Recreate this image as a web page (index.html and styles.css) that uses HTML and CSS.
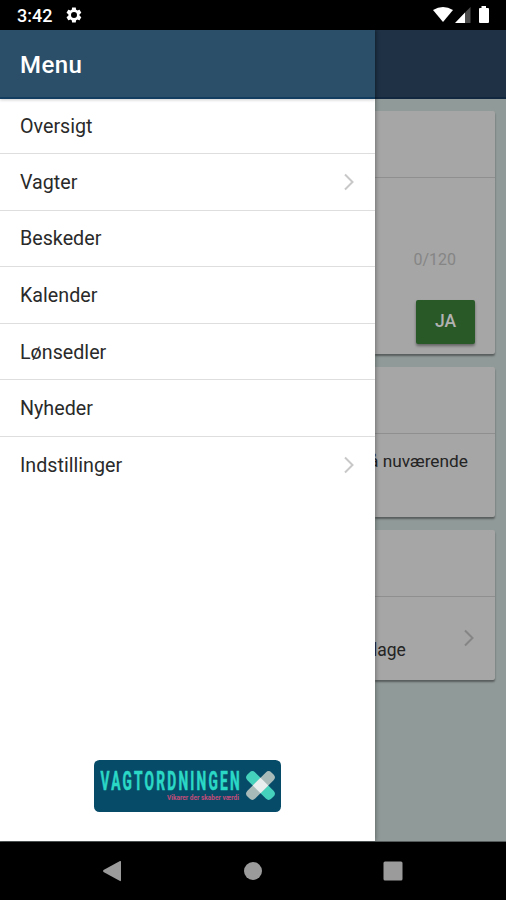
FILE: index.html
```html
<!DOCTYPE html>
<html lang="da">
<head>
<meta charset="utf-8">
<title>Menu</title>
<link rel="stylesheet" href="styles.css">
</head>
<body>
<div class="phone">
  <header class="status">
    <span class="clock">3:42</span>
    <svg class="gear" viewBox="0 0 24 24"><path fill="#fff" fill-rule="evenodd" d="M19.4 13c.1-.7.1-1.300 0-2l2.100-1.700c.2-.1.300-.4.100-.6l-2-3.500c-.1-.2-.4-.3-.6-.2l-2.500 1c-.5-.4-1.100-.7-1.700-1l-.4-2.600c0-.3-.2-.4-.5-.4h-4c-.3 0-.5.200-.5.400L9 5c-.6.300-1.200.6-1.700 1l-2.500-1c-.2-.1-.5 0-.6.200l-2 3.500c-.1.200-.1.500.1.600L4.500 11v2l-2.200 1.700c-.2.100-.2.400-.1.600l2 3.500c.1.200.4.300.6.200l2.500-1c.5.400 1.100.7 1.700 1l.4 2.600c0 .3.200.4.500.4h4c.3 0 .5-.2.500-.4l.4-2.600c.6-.3 1.200-.6 1.700-1l2.500 1c.2.100.5 0 .6-.2l2-3.500c.1-.2.100-.5-.1-.6zM12 8a4 4 0 1 1 0 8a4 4 0 0 1 0-8z"/></svg>
    <svg class="signals" viewBox="0 0 60 20"><path fill="#fff" d="M1 5Q11-1 21 5L11 17Z"/><path fill="#4c4c4c" d="M38.500 2V18H33V7.500Z"/><path fill="#fff" d="M33 7.500V18H23ZM47 4a1 1 0 0 1 1-1H49.500V1H54V3H56a1 1 0 0 1 1 1V17a1 1 0 0 1-1 1H48a1 1 0 0 1-1-1Z"/></svg>
  </header>
  <main class="app">
    <nav class="drawer">
      <h1 class="title">Menu</h1>
      <ul class="menu">
        <li>Oversigt</li>
        <li>Vagter<svg class="chevron" viewBox="0 0 10 18"><path d="M1 1.500L8.500 9L1 16.500"/></svg></li>
        <li>Beskeder</li>
        <li>Kalender</li>
        <li>Lønsedler</li>
        <li>Nyheder</li>
        <li>Indstillinger<svg class="chevron" viewBox="0 0 10 18"><path d="M1 1.500L8.500 9L1 16.500"/></svg></li>
      </ul>
      <svg class="logo" viewBox="0 0 187 52">
        <rect width="187" height="52" rx="5.500" fill="#064b68"/>
        <text class="brand" transform="translate(6.500 30.300) scale(.55 1)" textLength="253" lengthAdjust="spacing">VAGTORDNINGEN</text>
        <text class="tagline" x="73" y="39.500" textLength="72" lengthAdjust="spacingAndGlyphs">Vikarer der skaber værdi</text>
        <g transform="translate(166.500 25.500)">
          <rect x="-17" y="-5.500" width="34" height="11" rx="4" fill="#45d2bd" transform="rotate(45)"/>
          <rect x="-17" y="-5.500" width="34" height="11" rx="4" fill="#a9bbb8" transform="rotate(-45)"/>
          <rect x="-5.500" y="-5.500" width="11" height="11" fill="#e8eeee" transform="rotate(45)"/>
        </g>
      </svg>
    </nav>
    <div class="page">
      <div class="bar"></div>
      <section class="card first">
        <div class="head"></div>
        <p class="count">0/120</p>
        <button class="yes">JA</button>
      </section>
      <section class="card second">
        <div class="head"></div>
        <p class="current">å nuværende</p>
      </section>
      <section class="card third">
        <div class="head"></div>
        <div class="row"><span>lage</span><svg class="chevron" viewBox="0 0 10 18"><path d="M1 1.500L8.500 9L1 16.500"/></svg></div>
      </section>
    </div>
  </main>
  <footer class="navigation">
    <svg viewBox="0 0 20 22"><path fill="#9b9b9b" d="M18 1Q19 .500 19 2V20Q19 21.500 18 21L1.500 12Q.500 11 1.500 10Z"/></svg>
    <svg viewBox="0 0 20 22"><circle cx="10" cy="11" r="9" fill="#9b9b9b"/></svg>
    <svg viewBox="0 0 20 22"><rect x=".5" y="1.500" width="19" height="19" rx="1.500" fill="#9b9b9b"/></svg>
  </footer>
</div>
</body>
</html>
```
FILE: styles.css
```css
* { box-sizing: border-box; }
body { margin: 0; font-family: Roboto, "Noto Sans", sans-serif; background: #000; }
h1, p, ul { margin: 0; padding: 0; }
.phone { width: 506px; height: 900px; display: flex; flex-direction: column; overflow: hidden; }
.status { height: 30px; flex: none; display: flex; align-items: center; padding: 2px 14px 0 17px; background: #000; color: #fff; }
.clock { width: 48px; font-size: 18px; font-weight: 500; line-height: 28px; }
.gear { width: 18px; height: 18px; margin-top: -2px; }
.signals { width: 60px; height: 20px; margin-top: -2px; margin-left: auto; }
.app { height: 812px; flex: none; display: grid; grid-template-columns: 375px 131px; border-bottom: 1px solid #555b5b; }
.drawer { z-index: 1; display: flex; flex-direction: column; align-items: center; background: #fff; box-shadow: 1px 0 4px rgba(0, 0, 0, .3); }
.title { width: 100%; height: 69px; padding-left: 20px; line-height: 70px; font-size: 24px; font-weight: 500; letter-spacing: .4px; color: #fff; background: #2c4f69; border-bottom: 2px solid #123c60; box-shadow: 0 1px 3px rgba(0, 0, 0, .2); }
.menu { width: 100%; list-style: none; }
.menu li { height: 56.600px; display: flex; align-items: center; justify-content: space-between; padding: 1px 21px 0 20px; border-bottom: 1px solid #dedede; font-size: 19.700px; color: #2a2a2a; }
.menu li:first-child { height: 55px; padding-top: 0; }
.menu li:last-child { border: 0; padding-top: 0; }
.chevron { width: 10px; height: 18px; flex: none; fill: none; stroke: #c8c8c8; stroke-width: 2; }
.logo { width: 187px; height: 52px; margin-top: auto; margin-bottom: 29px; }
.brand { font-size: 25px; font-weight: 700; fill: #2bd8c6; stroke: #2bd8c6; stroke-width: .6px; }
.tagline { font-size: 7.500px; font-weight: 700; fill: #c34b79; }
.page { overflow: hidden; background: #909a98; }
.bar { height: 69px; background: #1e3145; border-bottom: 2px solid #10273f; }
.card { width: 120px; display: flex; flex-direction: column; background: #a6a6a6; border-radius: 0 2px 2px 0; box-shadow: 0 2px 2px rgba(0, 0, 0, .4); }
.head { height: 67px; flex: none; border-bottom: 1px solid #8f8f8f; }
.first { height: 243px; margin-top: 12px; }
.second { height: 150px; margin-top: 13px; }
.third { height: 150px; margin-top: 13px; }
.count { margin-top: 70px; padding-right: 39px; text-align: right; font-size: 16px; line-height: 24px; color: #858585; }
.yes { width: 59px; height: 44px; margin: 28px 0 0 41px; padding: 0 0 2px; border: 0; border-radius: 2px; background: #2a5928; color: #b2b2b2; font: 500 17.500px Roboto, sans-serif; box-shadow: 0 2px 3px rgba(0, 0, 0, .4); }
.current { width: 93px; margin-top: 15px; display: flex; justify-content: flex-end; white-space: nowrap; font-size: 17.300px; line-height: 24px; color: #242424; }
.row { display: flex; justify-content: space-between; padding: 32px 21px 0 0; font-size: 17.500px; color: #242424; }
.row span { margin-left: -2px; padding-top: 11px; }
.row .chevron { stroke: #858585; }
.navigation { height: 58px; display: flex; justify-content: space-between; align-items: center; padding: 0 103px 0 102px; background: #000; }
.navigation svg { width: 20px; height: 22px; }
```
